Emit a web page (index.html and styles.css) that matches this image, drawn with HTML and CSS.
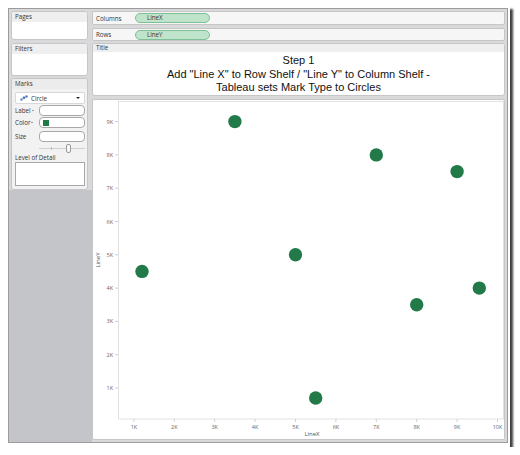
FILE: index.html
```html
<!DOCTYPE html>
<html>
<head>
<meta charset="utf-8">
<link rel="stylesheet" href="styles.css">
</head>
<body>
<div class="frame">
  <div class="app">
    <div class="left">
      <div class="panel pages">
        <div class="ph">Pages</div>
        <div class="pb"></div>
      </div>
      <div class="panel filters">
        <div class="ph">Filters</div>
        <div class="pb"></div>
      </div>
      <div class="panel marks">
        <div class="ph">Marks</div>
        <div class="mb">
          <div class="dropdown">
            <svg class="dots" width="8" height="6" viewBox="0 0 8 6"><circle cx="1.5" cy="4.5" r="1.3" fill="#6a8fc8"/><circle cx="4" cy="2.8" r="1.3" fill="#3d6fb8"/><circle cx="6.5" cy="1.5" r="1.3" fill="#5b84c4"/></svg>
            <span class="dtext">Circle</span>
            <span class="caret"></span>
          </div>
          <div class="mrow"><span class="ml">Label<span class="sc"></span></span><div class="field"></div></div>
          <div class="mrow"><span class="ml">Color<span class="sc"></span></span><div class="field"><span class="swatch"></span></div></div>
          <div class="mrow size"><span class="ml">Size</span><div class="field"></div></div>
          <div class="slider"><span class="tick"></span><span class="knob"></span></div>
          <div class="lod">Level of Detail</div>
          <div class="lodbox"></div>
        </div>
      </div>
      <div class="leftfill"></div>
    </div>
    <div class="right">
      <div class="shelf cols"><span class="sl">Columns</span><span class="pill">LineX</span></div>
      <div class="shelf rows"><span class="sl">Rows</span><span class="pill">LineY</span></div>
      <div class="panel title">
        <div class="ph">Title</div>
        <div class="tb">Step 1<br>Add "Line X" to Row Shelf / "Line Y" to Column Shelf -<br>Tableau sets Mark Type to Circles</div>
      </div>
      <div class="panel chart">
        <svg class="plot" width="411" height="339" viewBox="0 0 411 339">
          <rect x="25.5" y="1.5" width="385" height="317.5" fill="#fff" stroke="#e2e2e2" stroke-width="1"/>
          <g stroke="#d0d0d0" stroke-width="1">
            <line x1="22" x2="25" y1="288" y2="288"/>
            <line x1="22" x2="25" y1="254.7" y2="254.7"/>
            <line x1="22" x2="25" y1="221.4" y2="221.4"/>
            <line x1="22" x2="25" y1="188.1" y2="188.1"/>
            <line x1="22" x2="25" y1="154.8" y2="154.8"/>
            <line x1="22" x2="25" y1="121.5" y2="121.5"/>
            <line x1="22" x2="25" y1="88.2" y2="88.2"/>
            <line x1="22" x2="25" y1="54.9" y2="54.9"/>
            <line x1="22" x2="25" y1="21.6" y2="21.6"/>
            <line x1="40.9" x2="40.9" y1="319" y2="322"/>
            <line x1="81.3" x2="81.3" y1="319" y2="322"/>
            <line x1="121.7" x2="121.7" y1="319" y2="322"/>
            <line x1="162.1" x2="162.1" y1="319" y2="322"/>
            <line x1="202.5" x2="202.5" y1="319" y2="322"/>
            <line x1="242.9" x2="242.9" y1="319" y2="322"/>
            <line x1="283.3" x2="283.3" y1="319" y2="322"/>
            <line x1="323.7" x2="323.7" y1="319" y2="322"/>
            <line x1="364.1" x2="364.1" y1="319" y2="322"/>
            <line x1="404.5" x2="404.5" y1="319" y2="322"/>
          </g>
          <g class="ylab" text-anchor="end">
            <text x="20" y="290">1K</text>
            <text x="20" y="256.7">2K</text>
            <text x="20" y="223.4">3K</text>
            <text x="20" y="190.1">4K</text>
            <text x="20" y="156.8">5K</text>
            <text x="20" y="123.5">6K</text>
            <text x="20" y="90.2">7K</text>
            <text x="20" y="56.9">8K</text>
            <text x="20" y="23.6">9K</text>
          </g>
          <g class="xlab" text-anchor="middle">
            <text x="40.9" y="329">1K</text>
            <text x="81.3" y="329">2K</text>
            <text x="121.7" y="329">3K</text>
            <text x="162.1" y="329">4K</text>
            <text x="202.5" y="329">5K</text>
            <text x="242.9" y="329">6K</text>
            <text x="283.3" y="329">7K</text>
            <text x="323.7" y="329">8K</text>
            <text x="364.1" y="329">9K</text>
            <text x="404.5" y="329">10K</text>
          </g>
          <text class="axt" x="219" y="336" text-anchor="middle">LineX</text>
          <text class="axt" x="0" y="0" text-anchor="middle" transform="translate(7 160) rotate(-90)">LineY</text>
          <g fill="#217a48">
            <circle cx="49" cy="171.4" r="6.7"/>
            <circle cx="141.9" cy="21.6" r="6.7"/>
            <circle cx="202.5" cy="154.8" r="6.7"/>
            <circle cx="222.7" cy="298" r="6.7"/>
            <circle cx="283.3" cy="54.9" r="6.7"/>
            <circle cx="323.7" cy="204.8" r="6.7"/>
            <circle cx="364.1" cy="71.6" r="6.7"/>
            <circle cx="386.3" cy="188.1" r="6.7"/>
          </g>
        </svg>
      </div>
    </div>
  </div>
</div>
</body>
</html>
```

FILE: styles.css
```css
html, body {
  margin: 0;
  padding: 0;
  background: #ffffff;
}
body {
  font-family: "Open Sans", "DejaVu Sans", sans-serif;
  color: #333;
}
.frame {
  margin: 6px 0 0 6px;
  width: 504px;
  height: 441px;
  box-sizing: border-box;
  padding: 2px 2px 4px 2px;
  background: #ffffff;
  box-shadow: 3px 3px 2px rgba(0, 0, 0, 0.75);
}
.app {
  box-sizing: border-box;
  width: 500px;
  height: 435px;
  border: 1px solid #9c9c9c;
  background: #d9d9db;
  padding: 2px;
  display: flex;
  gap: 4px;
}
.left {
  width: 77px;
  display: flex;
  flex-direction: column;
}
.right {
  width: 413px;
  display: flex;
  flex-direction: column;
}
.panel {
  box-sizing: border-box;
  background: #ffffff;
  border: 1px solid #c6c6c6;
  border-radius: 3px;
  overflow: hidden;
}
.ph {
  height: 10px;
  background: #efefef;
  font-size: 6.2px;
  line-height: 10px;
  padding-left: 3px;
  color: #333;
}
.pages { height: 29px; }
.filters { height: 33px; margin-top: 3px; }
.marks {
  height: 112px;
  margin-top: 2px;
  background: #f2f2f2;
}
.marks .ph { background: #ececec; }
.leftfill {
  flex: 1;
  margin: 0 -4px -2px -2px;
  background: #c4c5c9;
}
.mb {
  padding: 3px 2px 0 3px;
}
.dropdown {
  height: 10px;
  background: #ffffff;
  border: 1px solid #d8d8d8;
  border-radius: 2px;
  display: flex;
  align-items: center;
  font-size: 6.2px;
  position: relative;
}
.dots { margin: 0 3px 0 4px; }
.caret {
  position: absolute;
  right: 4px;
  top: 4px;
  width: 0;
  height: 0;
  border-left: 2px solid transparent;
  border-right: 2px solid transparent;
  border-top: 2px solid #222;
}
.mrow {
  display: flex;
  align-items: center;
  height: 11px;
  margin-top: 1px;
}
.mrow:first-of-type { margin-top: 3px; }
.mrow.size { margin-top: 3px; }
.ml {
  width: 24px;
  font-size: 6.2px;
  display: flex;
  align-items: center;
}
.sc {
  display: inline-block;
  width: 0;
  height: 0;
  margin-left: 1px;
  border-left: 1.5px solid transparent;
  border-right: 1.5px solid transparent;
  border-top: 1.5px solid #444;
}
.field {
  flex: 1;
  height: 9px;
  background: #ffffff;
  border: 1px solid #a8a8a8;
  border-radius: 4px;
  display: flex;
  align-items: center;
}
.swatch {
  width: 6px;
  height: 6px;
  background: #1f7a45;
  margin-left: 3px;
}
.slider {
  margin: 2px 0 0 24px;
  height: 8px;
  position: relative;
  border-bottom: 0;
}
.slider::before {
  content: "";
  position: absolute;
  left: 0;
  right: 0;
  top: 4px;
  height: 1px;
  background: #d0d0d0;
}
.slider .tick {
  position: absolute;
  left: 12px;
  top: 3px;
  width: 1px;
  height: 3px;
  background: #bbb;
}
.slider .knob {
  position: absolute;
  left: 27px;
  top: 0;
  width: 3px;
  height: 7px;
  border: 1px solid #999;
  border-radius: 2px;
  background: #f8f8f8;
}
.lod {
  font-size: 6.2px;
  line-height: 8px;
  margin-top: 2px;
}
.lodbox {
  height: 22px;
  background: #ffffff;
  border: 1px solid #a8a8a8;
  margin-top: 0;
}
.shelf {
  box-sizing: border-box;
  background: #f6f6f6;
  border: 1px solid #c6c6c6;
  border-radius: 2px;
  display: flex;
  align-items: center;
  font-size: 6.2px;
}
.cols { height: 14px; }
.rows { height: 13px; margin-top: 3px; }
.sl {
  width: 39px;
  padding-left: 3px;
}
.pill {
  box-sizing: border-box;
  width: 75px;
  height: 10px;
  background: #bfe3cb;
  border: 1px solid #7fbf95;
  border-radius: 5px;
  line-height: 8px;
  padding-left: 11px;
  color: #333;
}
.title {
  height: 53px;
  margin-top: 2px;
}
.title .ph { height: 8px; line-height: 8px; }
.tb {
  text-align: center;
  font-family: "Liberation Sans", Arial, sans-serif;
  font-size: 11px;
  line-height: 13.5px;
  color: #111;
  padding-top: 2px;
}
.chart {
  height: 341px;
  margin-top: 3px;
  border-radius: 2px;
}
.plot { display: block; }
.ylab text, .xlab text {
  font-family: "Open Sans", "DejaVu Sans", sans-serif;
  font-size: 5.5px;
  fill: #666;
}
.axt {
  font-family: "Open Sans", "DejaVu Sans", sans-serif;
  font-size: 6px;
  fill: #555;
}
```
